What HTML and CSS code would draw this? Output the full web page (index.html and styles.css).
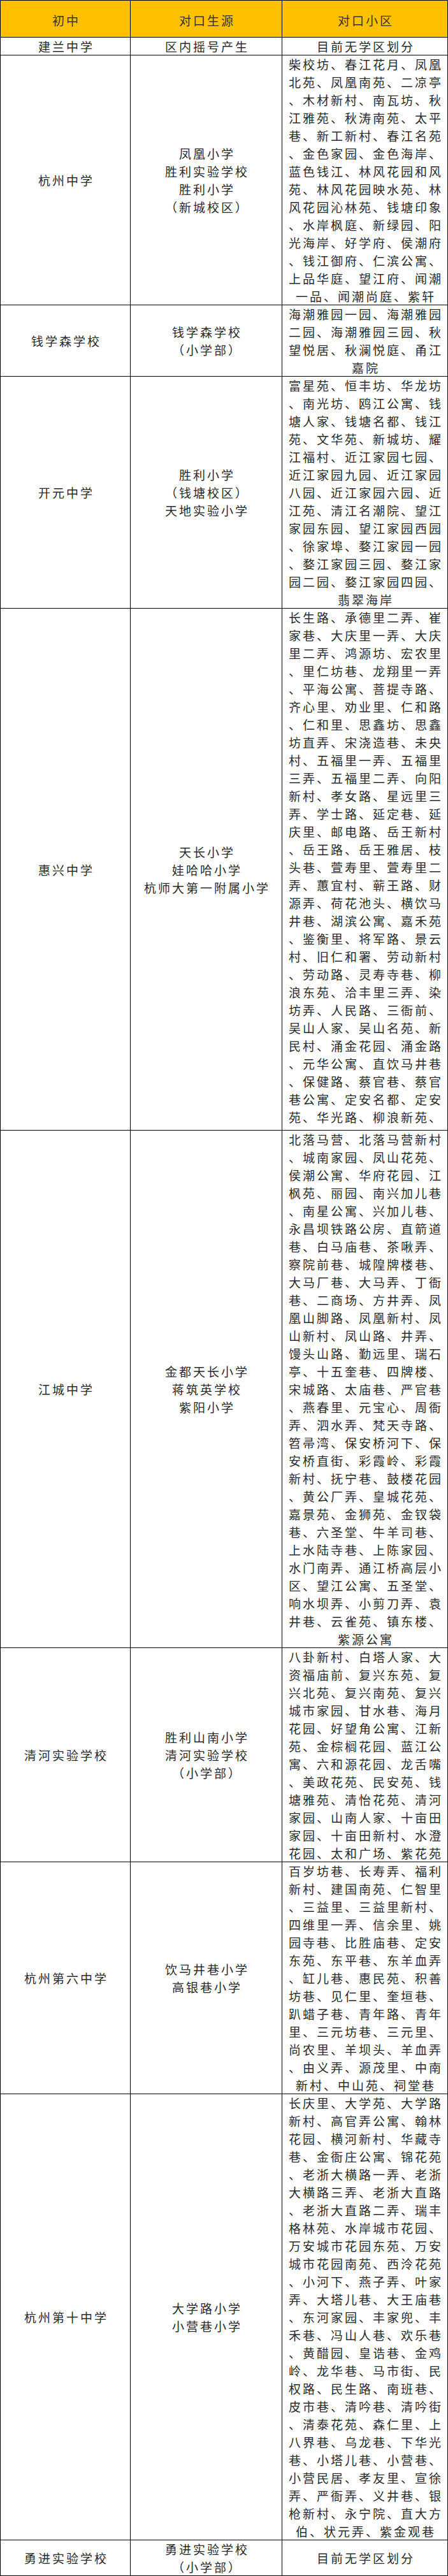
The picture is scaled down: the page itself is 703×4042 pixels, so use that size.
FILE: index.html
```html
<!DOCTYPE html>
<html lang="zh-CN">
<head>
<meta charset="utf-8">
<title>初中对口生源与小区</title>
<link rel="stylesheet" href="styles.css">
</head>
<body>
<div class="table">
  <div class="cell head"><div class="t">初中</div></div>
  <div class="cell head"><div class="t">对口生源</div></div>
  <div class="cell head"><div class="t">对口小区</div></div>

  <div class="cell"><div class="t">建兰中学</div></div>
  <div class="cell"><div class="t">区内摇号产生</div></div>
  <div class="cell"><div class="t">目前无学区划分</div></div>

  <div class="cell"><div class="t">杭州中学</div></div>
  <div class="cell"><div class="t">凤凰小学<br>胜利实验学校<br>胜利小学<br>（新城校区）</div></div>
  <div class="cell area"><div class="t">柴校坊、春江花月、凤凰<br>北苑、凤凰南苑、二凉亭<br>、木材新村、南瓦坊、秋<br>江雅苑、秋涛南苑、太平<br>巷、新工新村、春江名苑<br>、金色家园、金色海岸、<br>蓝色钱江、林风花园和风<br>苑、林风花园映水苑、林<br>风花园沁林苑、钱塘印象<br>、水岸枫庭、新绿园、阳<br>光海岸、好学府、侯潮府<br>、钱江御府、仁滨公寓、<br>上品华庭、望江府、闻潮<br>一品、闻潮尚庭、紫轩</div></div>

  <div class="cell"><div class="t">钱学森学校</div></div>
  <div class="cell"><div class="t">钱学森学校<br>（小学部）</div></div>
  <div class="cell area"><div class="t">海潮雅园一园、海潮雅园<br>二园、海潮雅园三园、秋<br>望悦居、秋澜悦庭、甬江<br>嘉院</div></div>

  <div class="cell"><div class="t">开元中学</div></div>
  <div class="cell"><div class="t">胜利小学<br>（钱塘校区）<br>天地实验小学</div></div>
  <div class="cell area"><div class="t">富星苑、恒丰坊、华龙坊<br>、南光坊、鸥江公寓、钱<br>塘人家、钱塘名都、钱江<br>苑、文华苑、新城坊、耀<br>江福村、近江家园七园、<br>近江家园九园、近江家园<br>八园、近江家园六园、近<br>江苑、清江名潮院、望江<br>家园东园、望江家园西园<br>、徐家埠、婺江家园一园<br>、婺江家园三园、婺江家<br>园二园、婺江家园四园、<br>翡翠海岸</div></div>

  <div class="cell"><div class="t">惠兴中学</div></div>
  <div class="cell"><div class="t">天长小学<br>娃哈哈小学<br>杭师大第一附属小学</div></div>
  <div class="cell area clipped"><div class="t">长生路、承德里二弄、崔<br>家巷、大庆里一弄、大庆<br>里二弄、鸿源坊、宏农里<br>、里仁坊巷、龙翔里一弄<br>、平海公寓、菩提寺路、<br>齐心里、劝业里、仁和路<br>、仁和里、思鑫坊、思鑫<br>坊直弄、宋浇造巷、未央<br>村、五福里一弄、五福里<br>三弄、五福里二弄、向阳<br>新村、孝女路、星远里三<br>弄、学士路、延定巷、延<br>庆里、邮电路、岳王新村<br>、岳王路、岳王雅居、枝<br>头巷、萱寿里、萱寿里二<br>弄、蕙宜村、蕲王路、财<br>源弄、荷花池头、横饮马<br>井巷、湖滨公寓、嘉禾苑<br>、鉴衡里、将军路、景云<br>村、旧仁和署、劳动新村<br>、劳动路、灵寿寺巷、柳<br>浪东苑、洽丰里三弄、染<br>坊弄、人民路、三衙前、<br>吴山人家、吴山名苑、新<br>民村、涌金花园、涌金路<br>、元华公寓、直饮马井巷<br>、保健路、蔡官巷、蔡官<br>巷公寓、定安名都、定安<br>苑、华光路、柳浪新苑、</div></div>

  <div class="cell"><div class="t">江城中学</div></div>
  <div class="cell"><div class="t">金都天长小学<br>蒋筑英学校<br>紫阳小学</div></div>
  <div class="cell area"><div class="t">北落马营、北落马营新村<br>、城南家园、凤山花苑、<br>侯潮公寓、华府花园、江<br>枫苑、丽园、南兴加儿巷<br>、南星公寓、兴加儿巷、<br>永昌坝铁路公房、直箭道<br>巷、白马庙巷、茶啾弄、<br>察院前巷、城隍牌楼巷、<br>大马厂巷、大马弄、丁衙<br>巷、二商场、方井弄、凤<br>凰山脚路、凤凰新村、凤<br>山新村、凤山路、井弄、<br>馒头山路、勤远里、瑞石<br>亭、十五奎巷、四牌楼、<br>宋城路、太庙巷、严官巷<br>、燕春里、元宝心、周衙<br>弄、泗水弄、梵天寺路、<br>笤帚湾、保安桥河下、保<br>安桥直街、彩霞岭、彩霞<br>新村、抚宁巷、鼓楼花园<br>、黄公厂弄、皇城花苑、<br>嘉景苑、金狮苑、金钗袋<br>巷、六圣堂、牛羊司巷、<br>上水陆寺巷、上陈家园、<br>水门南弄、通江桥高层小<br>区、望江公寓、五圣堂、<br>响水坝弄、小剪刀弄、袁<br>井巷、云雀苑、镇东楼、<br>紫源公寓</div></div>

  <div class="cell"><div class="t">清河实验学校</div></div>
  <div class="cell"><div class="t">胜利山南小学<br>清河实验学校<br>（小学部）</div></div>
  <div class="cell area"><div class="t">八卦新村、白塔人家、大<br>资福庙前、复兴东苑、复<br>兴北苑、复兴南苑、复兴<br>城市家园、甘水巷、海月<br>花园、好望角公寓、江新<br>苑、金棕榈花园、蓝江公<br>寓、六和源花园、龙舌嘴<br>、美政花苑、民安苑、钱<br>塘雅苑、清怡花苑、清河<br>家园、山南人家、十亩田<br>家园、十亩田新村、水澄<br>花园、太和广场、紫花苑</div></div>

  <div class="cell"><div class="t">杭州第六中学</div></div>
  <div class="cell"><div class="t">饮马井巷小学<br>高银巷小学</div></div>
  <div class="cell area"><div class="t">百岁坊巷、长寿弄、福利<br>新村、建国南苑、仁智里<br>、三益里、三益里新村、<br>四维里一弄、信余里、姚<br>园寺巷、比胜庙巷、定安<br>东苑、东平巷、东羊血弄<br>、缸儿巷、惠民苑、积善<br>坊巷、见仁里、奎垣巷、<br>趴蜡子巷、青年路、青年<br>里、三元坊巷、三元里、<br>尚农里、羊坝头、羊血弄<br>、由义弄、源茂里、中南<br>新村、中山苑、祠堂巷</div></div>

  <div class="cell"><div class="t">杭州第十中学</div></div>
  <div class="cell"><div class="t">大学路小学<br>小营巷小学</div></div>
  <div class="cell area"><div class="t">长庆里、大学苑、大学路<br>新村、高官弄公寓、翰林<br>花园、横河新村、华藏寺<br>巷、金衙庄公寓、锦花苑<br>、老浙大横路一弄、老浙<br>大横路三弄、老浙大直路<br>、老浙大直路二弄、瑞丰<br>格林苑、水岸城市花园、<br>万安城市花园东苑、万安<br>城市花园南苑、西泠花苑<br>、小河下、燕子弄、叶家<br>弄、大塔儿巷、大王庙巷<br>、东河家园、丰家兜、丰<br>禾巷、冯山人巷、欢乐巷<br>、黄醋园、皇诰巷、金鸡<br>岭、龙华巷、马市街、民<br>权路、民生路、南班巷、<br>皮市巷、清吟巷、清吟街<br>、清泰花苑、森仁里、上<br>八界巷、乌龙巷、下华光<br>巷、小塔儿巷、小营巷、<br>小营民居、孝友里、宣徐<br>弄、严衙弄、义井巷、银<br>枪新村、永宁院、直大方<br>伯、状元弄、紫金观巷</div></div>

  <div class="cell"><div class="t">勇进实验学校</div></div>
  <div class="cell"><div class="t">勇进实验学校<br>（小学部）</div></div>
  <div class="cell area"><div class="t">目前无学区划分</div></div>
</div>
</body>
</html>
```

FILE: styles.css
```css
html {
  overflow: hidden;
}

body {
  margin: 0;
  background: #ffffff;
  font-family: "Noto Sans CJK SC", "Noto Sans CJK TC", sans-serif;
  font-size: 19px;
  font-weight: 400;
  line-height: 28px;
  letter-spacing: 3px;
  color: #2a2a2a;
}

.table {
  width: 703px;
  box-sizing: border-box;
  display: grid;
  grid-template-columns: 203px 237px 1fr;
  gap: 1px;
  background: #000000;
  border: 1px solid #000000;
}

.cell {
  background: #ffffff;
  display: flex;
  flex-direction: column;
  justify-content: center;
  align-items: center;
  text-align: center;
  padding-left: 3px;
  white-space: nowrap;
}

.cell .t {
  margin-bottom: -1px;
}

.cell.head {
  background: #ffc000;
  height: 57px;
  box-sizing: border-box;
  justify-content: flex-start;
  padding-top: 17px;
  color: #3a3526;
}

.cell.head .t {
  margin-bottom: 0;
}

.cell.clipped {
  padding-bottom: 7px;
}
```
